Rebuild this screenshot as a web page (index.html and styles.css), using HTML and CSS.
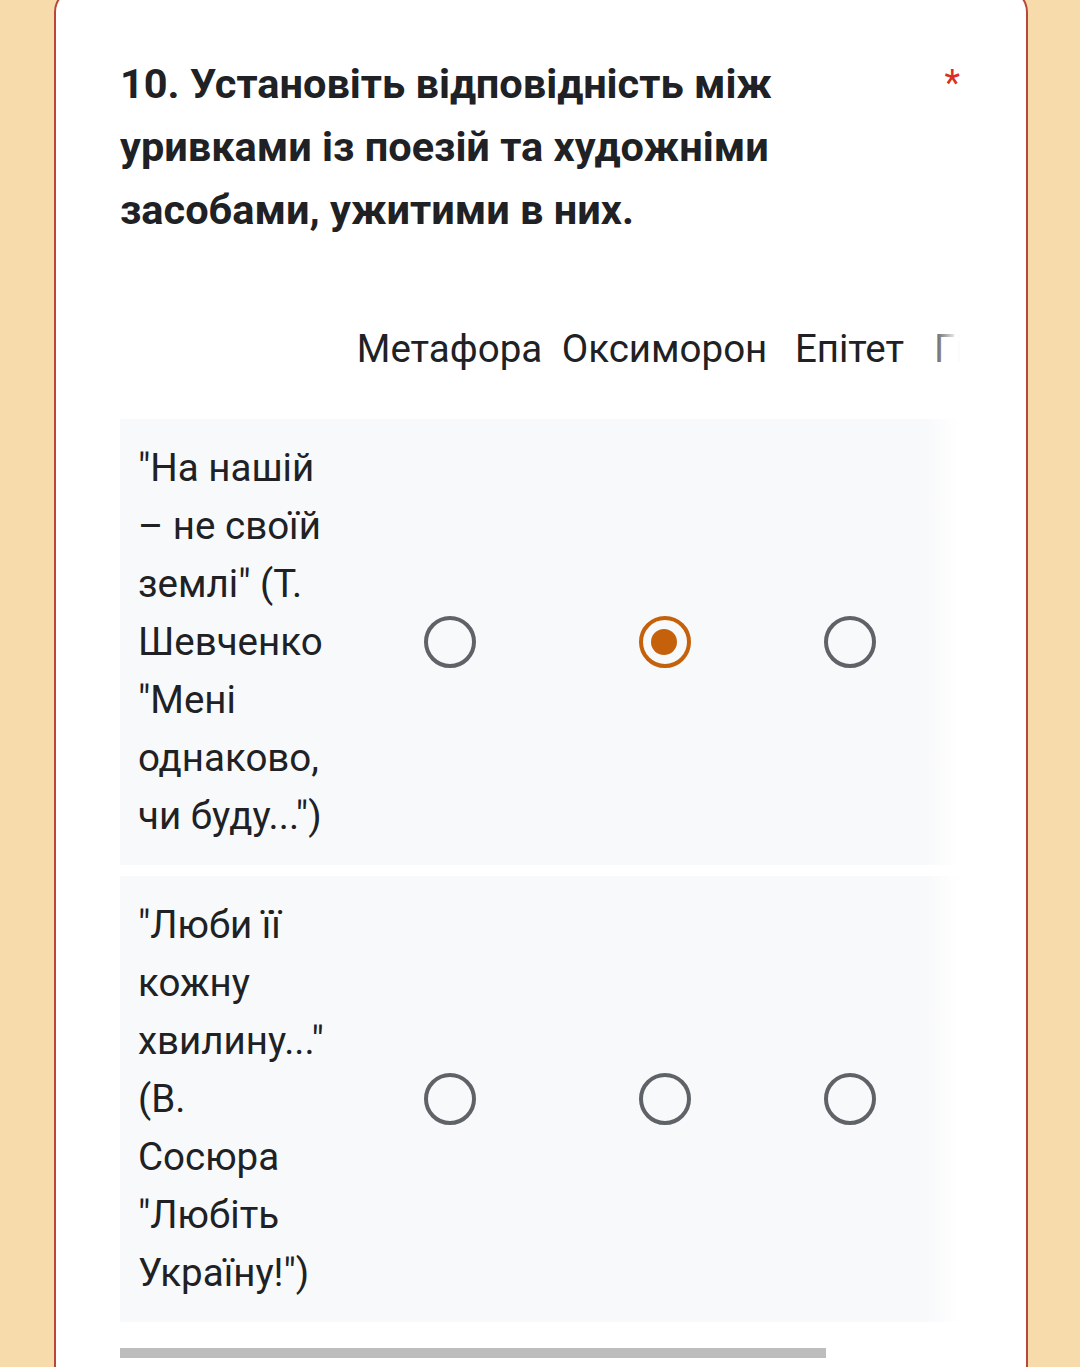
FILE: index.html
```html
<!DOCTYPE html>
<html lang="uk">
<head>
<meta charset="utf-8">
<title>Питання 10</title>
<link rel="stylesheet" href="styles.css">
</head>
<body>
<div class="card">
  <div class="title-row">
    <div class="title">10. Установіть відповідність між уривками із поезій та художніми засобами, ужитими в них.</div>
    <span class="req">*</span>
  </div>
  <div class="grid-wrap">
    <div class="grid">
      <div class="head-row">
        <div class="label-cell"></div>
        <div class="col c1">Метафора</div>
        <div class="col c2">Оксиморон</div>
        <div class="col c3">Епітет</div>
        <div class="col c4">Гіпербола</div>
      </div>
      <div class="row">
        <div class="label-cell">"На нашій – не своїй землі" (Т. Шевченко "Мені однаково, чи буду...")</div>
        <div class="col c1"><span class="radio"></span></div>
        <div class="col c2"><span class="radio checked"></span></div>
        <div class="col c3"><span class="radio"></span></div>
        <div class="col c4"><span class="radio"></span></div>
      </div>
      <div class="row">
        <div class="label-cell">"Люби її кожну хвилину..." (В. Сосюра "Любіть Україну!")</div>
        <div class="col c1"><span class="radio"></span></div>
        <div class="col c2"><span class="radio"></span></div>
        <div class="col c3"><span class="radio"></span></div>
        <div class="col c4"><span class="radio"></span></div>
      </div>
    </div>
    <div class="fade"></div>
  </div>
  <div class="scrollbar"></div>
</div>
</body>
</html>
```
FILE: styles.css
```css
html, body {
  margin: 0;
  padding: 0;
}
body {
  background: #f7dbab;
  font-family: Roboto, "Noto Sans", "Liberation Sans", sans-serif;
  color: #202124;
  height: 1367px;
  overflow: hidden;
}
.card {
  margin: -12px 52px 0 54px;
  background: #ffffff;
  border: 2px solid #b8473b;
  border-bottom: none;
  border-radius: 24px 24px 0 0;
  padding: 62px 66px 40px 64px;
  min-height: 1400px;
}
.title-row {
  display: flex;
  align-items: flex-start;
}
.title {
  flex: 1;
  font-size: 41.5px;
  font-weight: 700;
  line-height: 63px;
  padding-right: 30px;
}
.req {
  color: #d93025;
  font-size: 36px;
  line-height: 63px;
  padding-right: 0;
}
.grid-wrap {
  position: relative;
  overflow: hidden;
  margin-top: 79px;
}
.grid {
  display: flex;
  flex-direction: column;
  gap: 11px;
  width: 1000px;
}
.head-row, .row {
  display: flex;
  align-items: center;
}
.head-row {
  font-size: 38.5px;
  line-height: 58px;
  padding-bottom: 30px;
}
.row {
  background: #f8f9fa;
  font-size: 38.5px;
  line-height: 58px;
}
.label-cell {
  width: 227px;
  flex: none;
  box-sizing: border-box;
  padding: 20px 19px 20px 18px;
}
.col {
  flex: none;
  box-sizing: border-box;
  display: flex;
  justify-content: center;
  white-space: nowrap;
}
.c1 { width: 205px; }
.c2 { width: 225px; }
.c3 { width: 145px; }
.c4 { width: 200px; justify-content: flex-start; padding-left: 12px; }
.row .c4 { justify-content: center; padding-left: 0; }
.radio {
  display: block;
  width: 52px;
  height: 52px;
  box-sizing: border-box;
  border: 4.5px solid #5f6368;
  border-radius: 50%;
  position: relative;
}
.radio.checked {
  border-color: #c5600b;
}
.radio.checked::after {
  content: "";
  position: absolute;
  left: 8.5px;
  top: 8.5px;
  width: 26px;
  height: 26px;
  border-radius: 50%;
  background: #c5600b;
}
.fade {
  position: absolute;
  top: 0;
  right: 0;
  bottom: 0;
  width: 34px;
  background: linear-gradient(to right, rgba(255,255,255,0), rgba(255,255,255,0.85) 80%, #ffffff);
}
.scrollbar {
  margin-top: 26px;
  width: 706px;
  height: 10px;
  background: #bdbdbd;
}
```
